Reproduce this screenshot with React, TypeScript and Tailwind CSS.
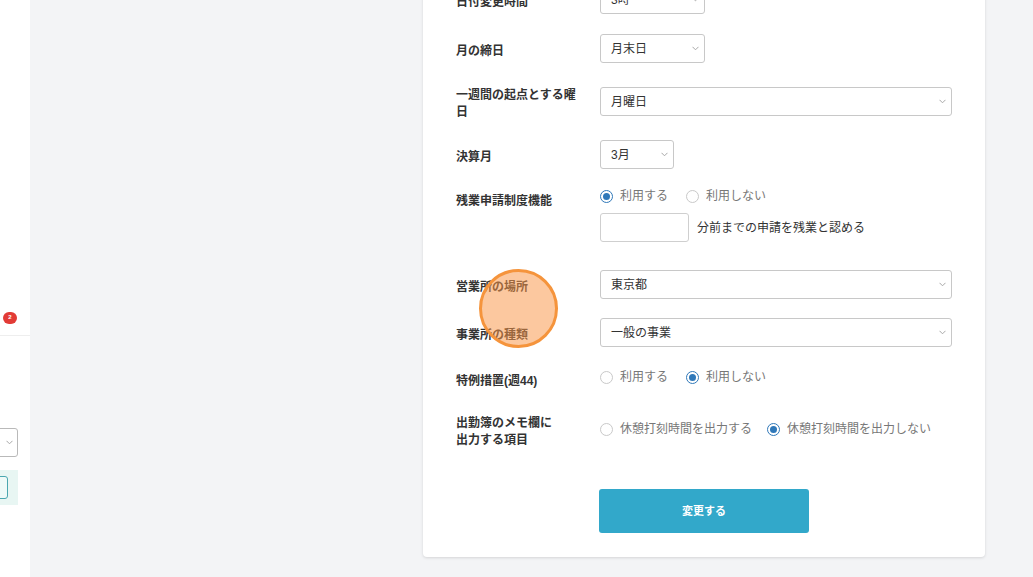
import React from "react";

const FONT = '"Liberation Sans", "Noto Sans CJK JP", sans-serif';

function Chevron() {
  return (
    <svg width="7" height="5" viewBox="0 0 7 5" className="shrink-0">
      <polyline points="0.5,0.8 3.5,3.8 6.5,0.8" fill="none" stroke="#a8a8a8" strokeWidth="1" />
    </svg>
  );
}

function SelectBox({ value, className = "" }: { value: string; className?: string }) {
  return (
    <div
      className={`h-[29px] border border-[#c8c8c8] rounded-[3px] bg-white flex items-center justify-between pl-[10px] pr-[5px] text-[12px] text-[#333] ${className}`}
    >
      <span>{value}</span>
      <Chevron />
    </div>
  );
}

function Radio({ label, checked, gap = "mr-[18px]" }: { label: string; checked?: boolean; gap?: string }) {
  return (
    <label className={`flex items-center ${gap}`}>
      <span
        className={`w-[13px] h-[13px] rounded-full border flex items-center justify-center bg-white ${
          checked ? "border-[#2f78b9]" : "border-[#c9c9c9]"
        }`}
      >
        {checked && <span className="w-[7px] h-[7px] rounded-full bg-[#2f78b9]" />}
      </span>
      <span className="ml-[7px] text-[12px] text-[#777]">{label}</span>
    </label>
  );
}

function Row({
  label,
  labelPad,
  className,
  children,
}: {
  label: React.ReactNode;
  labelPad: string;
  className: string;
  children: React.ReactNode;
}) {
  return (
    <div className={`flex items-start ${className}`}>
      <div className={`w-[128px] mr-[16px] shrink-0 text-[12px] font-bold leading-[17px] text-[#333] ${labelPad}`}>
        {label}
      </div>
      <div className="flex-1 min-w-0">{children}</div>
    </div>
  );
}

function Sidebar() {
  return (
    <aside className="w-[30px] h-[577px] shrink-0 bg-white overflow-hidden flex justify-end">
      <div className="w-[200px] shrink-0 flex flex-col">
        <div className="h-[302px]" />
        <div className="h-[34px] border-b border-[#eeeeee] flex items-center justify-end pr-[13px] pb-[2px]">
          <span className="w-[14px] h-[12px] rounded-full bg-[#e23b36] text-white text-[6px] font-bold flex items-center justify-center">
            2
          </span>
        </div>
        <div className="mt-[92px] pr-[12px]">
          <div className="h-[29px] border border-[#b9b9b9] rounded-[3px] flex items-center justify-end pr-[4px]">
            <Chevron />
          </div>
        </div>
        <div className="mt-[13px] mr-[12px] h-[35px] bg-[#e8f6f3] py-[6px] pr-[10px]">
          <div className="h-full border border-[#4aa7b0] rounded-[3px] bg-[#eefaf8]" />
        </div>
      </div>
    </aside>
  );
}

export default function App() {
  return (
    <div className="relative w-[1033px] h-[577px] overflow-hidden flex bg-[#f3f4f6]" style={{ fontFamily: FONT }}>
      <Sidebar />
      <main className="flex-1 min-w-0">
        <section className="ml-[393px] w-[562px] mt-[-35px] bg-white rounded-[4px] shadow-[0_1px_3px_rgba(0,0,0,0.13)] px-[33px] pt-[20px] pb-[24px]">
          <Row label="日付変更時間" labelPad="pt-[9px]" className="">
            <SelectBox value="3時" className="w-[105px]" />
          </Row>
          <Row label="月の締日" labelPad="pt-[9px]" className="mt-[20px]">
            <SelectBox value="月末日" className="w-[105px]" />
          </Row>
          <Row label="一週間の起点とする曜日" labelPad="pt-0" className="mt-[24px]">
            <SelectBox value="月曜日" />
          </Row>
          <Row label="決算月" labelPad="pt-[9px]" className="mt-[19px]">
            <SelectBox value="3月" className="w-[74px]" />
          </Row>
          <Row label="残業申請制度機能" labelPad="pt-[7px]" className="mt-[17px]">
            <div className="h-[20px] flex items-center">
              <Radio label="利用する" checked />
              <Radio label="利用しない" />
            </div>
            <div className="mt-[7px] flex items-center">
              <div className="w-[89px] h-[29px] border border-[#cfcfcf] rounded-[3px]" />
              <span className="ml-[8px] text-[12px] text-[#333]">分前までの申請を残業と認める</span>
            </div>
          </Row>
          <Row label="営業所の場所" labelPad="pt-[9px]" className="mt-[28px]">
            <SelectBox value="東京都" />
          </Row>
          <Row label="事業所の種類" labelPad="pt-[9px]" className="mt-[19px]">
            <SelectBox value="一般の事業" />
          </Row>
          <Row label="特例措置(週44)" labelPad="pt-[6px]" className="mt-[20px]">
            <div className="h-[20px] flex items-center">
              <Radio label="利用する" />
              <Radio label="利用しない" checked />
            </div>
          </Row>
          <Row
            label={
              <>
                出勤簿のメモ欄に
                <br />
                出力する項目
              </>
            }
            labelPad="pt-0"
            className="mt-[25px]"
          >
            <div className="mt-[4px] h-[20px] flex items-center">
              <Radio label="休憩打刻時間を出力する" gap="mr-[15px]" />
              <Radio label="休憩打刻時間を出力しない" checked />
            </div>
          </Row>
          <button className="mt-[40px] ml-[143px] w-[210px] h-[44px] rounded-[3px] bg-[#32a8ca] text-white text-[11px] font-bold flex items-center justify-center">
            変更する
          </button>
        </section>
      </main>
      {/* click highlight */}
      <div className="absolute left-[479px] top-[269px] w-[79px] h-[79px] rounded-full border-[3px] border-[#f5943c] bg-[rgba(250,150,70,0.52)] pointer-events-none" />
    </div>
  );
}
